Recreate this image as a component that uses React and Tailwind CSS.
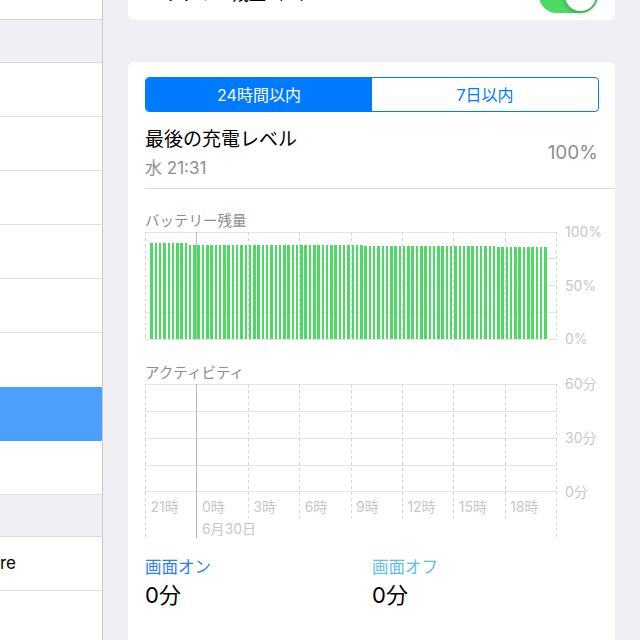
import React from 'react';

const gx = (i) => 0.5 + i * 51.375;
const hours = ['21時', '0時', '3時', '6時', '9時', '12時', '15時', '18時'];

// battery level per 15-min slot (svg y of bar top)
const barTop = (i) => {
  if (i <= 9) return 12.3;
  if (i <= 50) return 14;
  if (i <= 81) return 15;
  return 16.3;
};
const slots = Array.from({ length: 93 }, (_, k) => k + 1);

const SideRow = ({ children, className = '' }) => (
  <div className={`h-[54px] shrink-0 border-b border-[#e0e0e4] flex items-center text-[17px] text-black ${className}`}>
    {children}
  </div>
);

const BatteryChart = () => (
  <div className="relative h-[110px]">
    <svg width="414" height="110" className="block" shapeRendering="crispEdges">
      {[1.5, 27.5, 54.5, 81.5, 108.5].map((y) => (
        <line key={y} x1="0" x2="412" y1={y} y2={y} stroke="#e3e3e8" strokeWidth="1" />
      ))}
      {[0, 2, 3, 4, 5, 6, 7, 8].map((i) => (
        <line key={i} x1={gx(i)} x2={gx(i)} y1="1" y2="108" stroke="#d4d4d9" strokeWidth="1" strokeDasharray="3 3" />
      ))}
      {slots.map((i) => (
        <rect key={i} x={gx(0) + i * 4.28 + 0.6} y={barTop(i)} width="2.5" height={108 - barTop(i)} fill="#4cd964" />
      ))}
      <line x1={gx(1)} x2={gx(1)} y1="1" y2="108" stroke="#b9b9be" strokeWidth="1" />
    </svg>
    <span className="absolute left-[420px] top-[-7px] text-[14px] leading-[16px] text-[#c7c7cc]">100%</span>
    <span className="absolute left-[420px] top-[47px] text-[14px] leading-[16px] text-[#c7c7cc]">50%</span>
    <span className="absolute left-[420px] top-[100px] text-[14px] leading-[16px] text-[#c7c7cc]">0%</span>
  </div>
);

const ActivityChart = () => (
  <div className="relative h-[156px]">
    <svg width="414" height="156" className="block" shapeRendering="crispEdges">
      {[1.5, 28.5, 55.5, 82.5, 108.5].map((y) => (
        <line key={y} x1="0" x2="412" y1={y} y2={y} stroke="#e3e3e8" strokeWidth="1" />
      ))}
      {[0, 2, 3, 4, 5, 6, 7, 8].map((i) => (
        <line
          key={i}
          x1={gx(i)}
          x2={gx(i)}
          y1="1"
          y2={i === 0 || i === 8 ? 155 : 135}
          stroke="#d4d4d9"
          strokeWidth="1"
          strokeDasharray="3 3"
        />
      ))}
      <line x1={gx(1)} x2={gx(1)} y1="1" y2="155" stroke="#b9b9be" strokeWidth="1" />
    </svg>
    <span className="absolute left-[420px] top-[-7px] text-[14px] leading-[16px] text-[#c7c7cc]">60分</span>
    <span className="absolute left-[420px] top-[47px] text-[14px] leading-[16px] text-[#c7c7cc]">30分</span>
    <span className="absolute left-[420px] top-[101px] text-[14px] leading-[16px] text-[#c7c7cc]">0分</span>
    {hours.map((h, i) => (
      <span
        key={h}
        className="absolute top-[116px] text-[14px] leading-[16px] text-[#c7c7cc]"
        style={{ left: gx(i) + 5 }}
      >
        {h}
      </span>
    ))}
    <span className="absolute top-[138px] text-[14px] leading-[16px] text-[#c7c7cc]" style={{ left: gx(1) + 5 }}>
      6月30日
    </span>
  </div>
);

export default function App() {
  return (
    <div className="w-[640px] h-[640px] overflow-hidden flex bg-[#efeff4] font-['Inter','Noto_Sans_CJK_JP',sans-serif]">
      {/* sidebar */}
      <div className="w-[103px] shrink-0 bg-white border-r border-[#c8c7cc] flex flex-col overflow-hidden">
        <div className="h-[20px] shrink-0 border-b border-[#d8d8dc]" />
        <div className="h-[43px] shrink-0 bg-[#efeff4] border-b border-[#d8d8dc]" />
        <SideRow />
        <SideRow />
        <SideRow />
        <SideRow />
        <SideRow />
        <SideRow className="border-b-0" />
        <div className="h-[54px] shrink-0 bg-[#4ca0fb]" />
        <SideRow className="border-[#d8d8dc]" />
        <div className="h-[42px] shrink-0 bg-[#efeff4] border-b border-[#d8d8dc]" />
        <SideRow>re</SideRow>
        <SideRow />
      </div>

      {/* detail */}
      <div className="flex-1 flex flex-col px-[25px]">
        <div className="mt-[-30px] h-[50px] shrink-0 bg-white rounded-b-[6px] flex items-center justify-between pl-[19px] pr-[17px]">
          <span className="text-[17px] text-black">バッテリー残量（%）</span>
          <div className="w-[59px] h-[35px] rounded-full bg-[#4cd964] flex items-center justify-end pr-[2px]">
            <div className="w-[31px] h-[31px] rounded-full bg-white shadow-[0_2px_4px_rgba(0,0,0,0.25)]" />
          </div>
        </div>

        <div className="mt-[42px] h-[700px] shrink-0 bg-white rounded-t-[6px] pl-[17px] pr-[16px] pt-[15px]">
          <div className="h-[35px] flex border border-[#007aff] rounded-[4px] overflow-hidden text-[16px]">
            <div className="flex-1 bg-[#007aff] text-white flex items-center justify-center">24時間以内</div>
            <div className="flex-1 text-[#007aff] flex items-center justify-center">7日以内</div>
          </div>

          <div className="mt-[16px] flex items-center justify-between">
            <div>
              <div className="text-[19px] leading-[24px] text-black">最後の充電レベル</div>
              <div className="mt-[6px] text-[17px] leading-[20px] text-[#8e8e93]">水 21:31</div>
            </div>
            <div className="text-[19px] leading-[24px] text-[#8e8e93] pr-[1px]">100%</div>
          </div>

          <div className="mt-[10px] -mr-[16px] h-px bg-[#d8d8dc]" />

          <div className="mt-[24px] text-[14.5px] leading-[16px] text-[#8e8e93]">バッテリー残量</div>
          <div className="mt-[2px]">
            <BatteryChart />
          </div>

          <div className="mt-[24px] text-[14.5px] leading-[16px] text-[#8e8e93]">アクティビティ</div>
          <div className="mt-[2px]">
            <ActivityChart />
          </div>

          <div className="mt-[18px] grid grid-cols-2">
            <div>
              <div className="text-[16.5px] leading-[20px] text-[#2f80ec]">画面オン</div>
              <div className="mt-[5px] text-[22px] leading-[26px] text-black">0分</div>
            </div>
            <div>
              <div className="text-[16.5px] leading-[20px] text-[#62bdf4]">画面オフ</div>
              <div className="mt-[5px] text-[22px] leading-[26px] text-black">0分</div>
            </div>
          </div>
        </div>
      </div>
    </div>
  );
}
